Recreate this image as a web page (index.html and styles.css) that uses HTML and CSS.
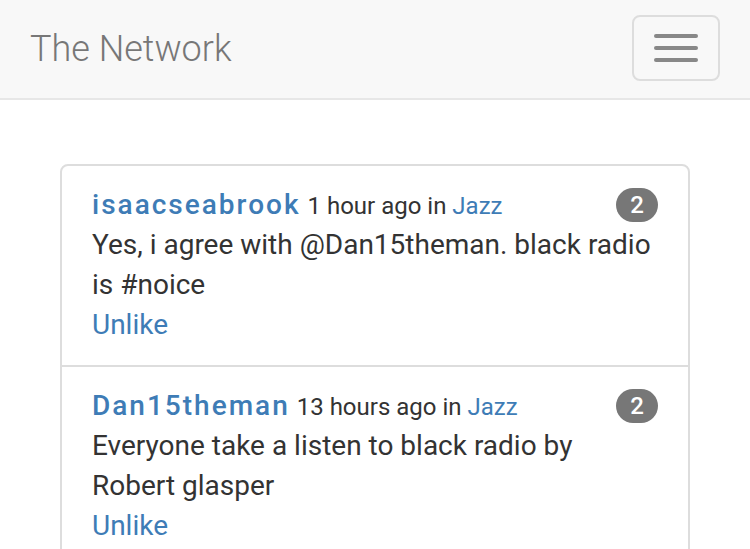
FILE: index.html
```html
<!DOCTYPE html>
<html>
<head>
<meta charset="utf-8">
<link rel="stylesheet" href="styles.css">
</head>
<body>
<nav class="navbar">
  <a class="brand" href="#">The Network</a>
  <button class="toggle" type="button" aria-label="Toggle navigation">
    <span class="bar"></span><span class="bar"></span><span class="bar"></span>
  </button>
</nav>
<main class="container">
  <ul class="list-group">
    <li class="item">
      <div class="head">
        <span class="info"><a class="user" href="#">isaacseabrook</a> <small class="meta">1 hour ago in <a href="#">Jazz</a></small></span>
        <span class="badge">2</span>
      </div>
      <div class="body">Yes, i agree with @Dan15theman. black radio is #noice</div>
      <a class="action" href="#">Unlike</a>
    </li>
    <li class="item">
      <div class="head">
        <span class="info"><a class="user" href="#">Dan15theman</a> <small class="meta">13 hours ago in <a href="#">Jazz</a></small></span>
        <span class="badge">2</span>
      </div>
      <div class="body">Everyone take a listen to black radio by Robert glasper</div>
      <a class="action" href="#">Unlike</a>
    </li>
  </ul>
</main>
</body>
</html>
```
FILE: styles.css
```css
* { box-sizing: border-box; }
html, body { margin: 0; padding: 0; }
body {
  font-family: Roboto, "Noto Sans", sans-serif;
  font-size: 28px;
  line-height: 40px;
  color: #333;
  background: #fff;
}
a { color: #3e7cb6; text-decoration: none; }

.navbar {
  display: flex;
  justify-content: space-between;
  align-items: flex-start;
  height: 100px;
  background: #f8f8f8;
  border-bottom: 2px solid #e7e7e7;
}
.brand {
  padding: 29px 30px;
  font-size: 36px;
  line-height: 40px;
  font-weight: 300;
  color: #777;
}
.toggle {
  margin: 15px 30px 0 0;
  width: 88px;
  height: 66px;
  padding: 0;
  background: transparent;
  border: 2px solid #ddd;
  border-radius: 8px;
  display: flex;
  flex-direction: column;
  align-items: center;
  justify-content: center;
  gap: 8px;
}
.bar {
  display: block;
  width: 44px;
  height: 4px;
  border-radius: 2px;
  background: #888;
}

.container { padding: 64px 60px 0; }
.list-group { list-style: none; margin: 0; padding: 0; }
.item {
  border: 2px solid #ddd;
  margin-bottom: -2px;
  padding: 19px 30px 20px;
  background: #fff;
}
.item:first-child { border-radius: 8px 8px 0 0; }
.head {
  display: flex;
  justify-content: space-between;
  align-items: center;
  height: 40px;
}
.user {
  font-weight: 500;
  letter-spacing: 2px;
  font-size: 28px;
}
.meta { font-size: 24px; color: #333; }
.badge {
  display: inline-block;
  min-width: 42px;
  padding: 0 14px;
  height: 34px;
  line-height: 34px;
  border-radius: 17px;
  background: #777;
  color: #fff;
  font-size: 24px;
  font-weight: 500;
  text-align: center;
}
.body { line-height: 40px; }
.action { display: inline-block; line-height: 40px; }
```
